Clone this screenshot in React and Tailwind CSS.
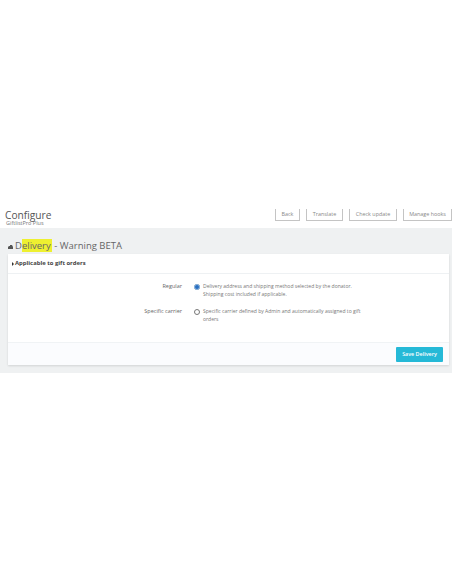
import React from 'react';

const headerButtons = [
    { label: 'Back', width: 'w-[25px]' },
    { label: 'Translate', width: 'w-[37px]' },
    { label: 'Check update', width: 'w-[48px]' },
    { label: 'Manage hooks', width: 'w-[49px]' },
];

function RadioRow({ label, checked, children }) {
    return (
        <div className="flex items-start">
            <div className="w-[174px] text-right text-[5.5px] leading-[7px] text-[#666]">{label}</div>
            <div className="ml-[12px] mt-[1px] flex h-[6px] w-[6px] shrink-0 items-center justify-center rounded-full border-[0.75px] border-[#777] bg-white">
                {checked && <div className="h-[6px] w-[6px] shrink-0 rounded-full border border-[#8fbbe6] bg-[#2a6fc0]" />}
            </div>
            <div className="ml-[3px] w-[158px] text-[5.05px] leading-[7.5px] text-[#777]">{children}</div>
        </div>
    );
}

function App() {
    return (
        <div className="h-[584px] w-[452px] overflow-hidden bg-white font-['Open_Sans',sans-serif]">
            <div className="flex h-[228px] items-end justify-between pb-[7px] pl-[5px]">
                <div className="relative h-[18px] pt-[5px]">
                    <div className="text-[10.2px] leading-[14px] text-[#555]">Configure</div>
                    <div className="absolute left-[1px] top-[17px] whitespace-nowrap text-[5.5px] leading-[7px] text-[#777]">GiftlistPro Plus</div>
                </div>
                <div className="flex gap-[6px]">
                    {headerButtons.map((btn) => (
                        <div
                            key={btn.label}
                            className={`${btn.width} flex h-[12px] items-center justify-center whitespace-nowrap border-x border-b border-[#c4c4c4] bg-white text-[5.4px] text-[#888]`}
                        >
                            {btn.label}
                        </div>
                    ))}
                </div>
            </div>

            <div className="h-[145px] bg-[#eff1f2] pl-[8px] pr-[3px] pt-[10px]">
                <div className="flex h-[16px] items-center">
                    <svg width="5" height="4" viewBox="0 0 5 4" className="mr-[2px] mt-[2px] text-[#555]">
                        <path d="M0 4V2l1-1h1V0h2l1 2v2z" fill="currentColor" />
                    </svg>
                    <div className="text-[9.5px] leading-[14px] text-[#666]">
                        <span>D</span>
                        <span className="bg-[#eef030] pr-[1px]">elivery</span>
                        <span> - Warning BETA</span>
                    </div>
                </div>

                <div className="h-[111px] bg-white shadow-[0_1px_2px_rgba(0,0,0,0.12)]">
                    <div className="flex h-[20px] items-center border-b border-[#eef1f3] pl-[4px]">
                        <span className="mr-[1px] h-0 w-0 border-y-[2px] border-l-[2px] border-y-transparent border-l-[#333]" />
                        <span className="text-[5.9px] font-bold text-[#444]">Applicable to gift orders</span>
                    </div>

                    <div className="flex h-[68px] flex-col gap-[10px] pt-[9px]">
                        <RadioRow label="Regular" checked>
                            Delivery address and shipping method selected by the donator.<br />
                            Shipping cost included if applicable.
                        </RadioRow>
                        <RadioRow label="Specific carrier">
                            Specific carrier defined by Admin and automatically assigned to gift orders
                        </RadioRow>
                    </div>

                    <div className="flex h-[23px] items-start justify-end border-t border-[#f0f3f5] bg-[#fbfcfe] pr-[6px] pt-[4px]">
                        <div className="flex h-[15px] w-[47px] items-center justify-center rounded-[1px] bg-[#25b9d7] text-[5.4px] font-semibold text-white">
                            Save Delivery
                        </div>
                    </div>
                </div>
            </div>
        </div>
    );
}

export default App;
